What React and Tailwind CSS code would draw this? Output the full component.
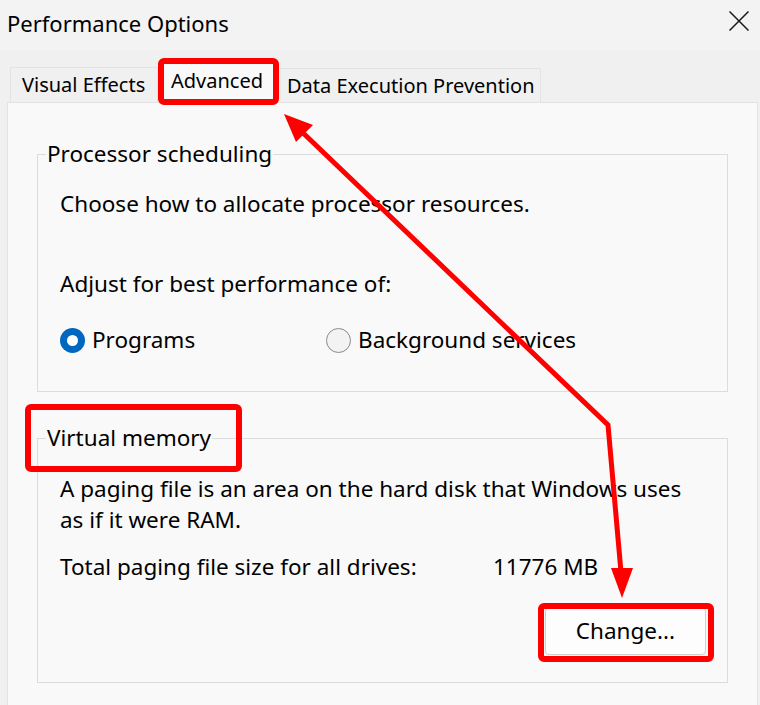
const font = { fontFamily: '"Segoe UI", "Noto Sans", sans-serif' };

function Radio({ checked, label }) {
  return (
    <label className="flex items-center gap-[7px]">
      {checked ? (
        <span className="w-[25px] h-[25px] rounded-full bg-[#0067c0] flex items-center justify-center">
          <span className="w-[11px] h-[11px] rounded-full bg-white" />
        </span>
      ) : (
        <span className="w-[25px] h-[25px] rounded-full border border-[#8a8a8a] bg-[#f3f3f3]" />
      )}
      <span>{label}</span>
    </label>
  );
}

function Annotations() {
  // red callouts drawn on top of the dialog
  return (
    <svg className="absolute inset-0 pointer-events-none" width="760" height="705" viewBox="0 0 760 705">
      <g fill="none" stroke="#ff0000" strokeWidth="6">
        <rect x="161" y="61" width="115" height="41" rx="3" />
        <rect x="28" y="407" width="211" height="62" rx="3" />
        <rect x="541" y="606" width="170" height="53" rx="3" />
      </g>
      <polyline points="300,130 608,425 621,572" fill="none" stroke="#ff0000" strokeWidth="5" strokeLinejoin="miter" />
      <polygon points="284,114 296,142 313,125" fill="#ff0000" />
      <polygon points="622,598 611,568 633,568" fill="#ff0000" />
    </svg>
  );
}

export default function App() {
  return (
    <div className="relative w-[760px] h-[705px] overflow-hidden bg-[#f0f0f0] text-black" style={font}>
      <div className="h-[50px] bg-[#f3f3f3] flex items-center justify-between pl-[7px] pr-[11px]">
        <span className="text-[22px] leading-none -mt-[4px]">Performance Options</span>
        <svg width="20" height="20" viewBox="0 0 20 20" className="-mt-[8px]">
          <path d="M0.5 0.5 L19.5 19.5 M19.5 0.5 L0.5 19.5" stroke="#1a1a1a" strokeWidth="1.5" />
        </svg>
      </div>

      <div className="flex items-end pl-[10px] h-[52px] text-[20px]">
        <div className="w-[148px] h-[35px] border border-b-0 border-[#e3e3e3] pl-[11px] leading-[34px]">Visual Effects</div>
        <div className="w-[120px] h-[39px] bg-[#f9f9f9] pl-[13px] leading-[36px]">Advanced</div>
        <div className="w-[263px] h-[34px] border border-b-0 border-[#e3e3e3] pl-[8px] leading-[33px]">Data Execution Prevention</div>
      </div>

      <div className="ml-[7px] mr-[2px] h-[620px] border border-[#e3e3e3] bg-[#f9f9f9] px-[29px] pt-[37px] text-[22.5px]">
        <fieldset className="border border-[#dcdcdc] pl-[22px] pr-[20px] pb-[37px]">
          <legend className="ml-[-14px] px-[1px] leading-[28px]">Processor scheduling</legend>
          <p className="leading-[28px] mt-[22px]">Choose how to allocate processor resources.</p>
          <p className="leading-[28px] mt-[52px]">Adjust for best performance of:</p>
          <div className="flex items-center h-[28px] mt-[28px]">
            <div className="w-[266px]"><Radio checked label="Programs" /></div>
            <Radio label="Background services" />
          </div>
        </fieldset>

        <fieldset className="border border-[#dcdcdc] mt-[32px] pl-[22px] pr-[21px] pb-[27px]">
          <legend className="ml-[-14px] px-[1px] leading-[28px]">Virtual memory</legend>
          <p className="leading-[31px] mt-[21px]">A paging file is an area on the hard disk that Windows uses as if it were RAM.</p>
          <div className="flex leading-[28px] mt-[18px]">
            <span className="w-[433px]">Total paging file size for all drives:</span>
            <span>11776 MB</span>
          </div>
          <div className="flex justify-end mt-[26px]">
            <button className="w-[161px] h-[48px] bg-[#fdfdfd] border border-[#d0d0d0] rounded-[4px] text-[22.5px]">Change...</button>
          </div>
        </fieldset>
      </div>

      <Annotations />
    </div>
  );
}
